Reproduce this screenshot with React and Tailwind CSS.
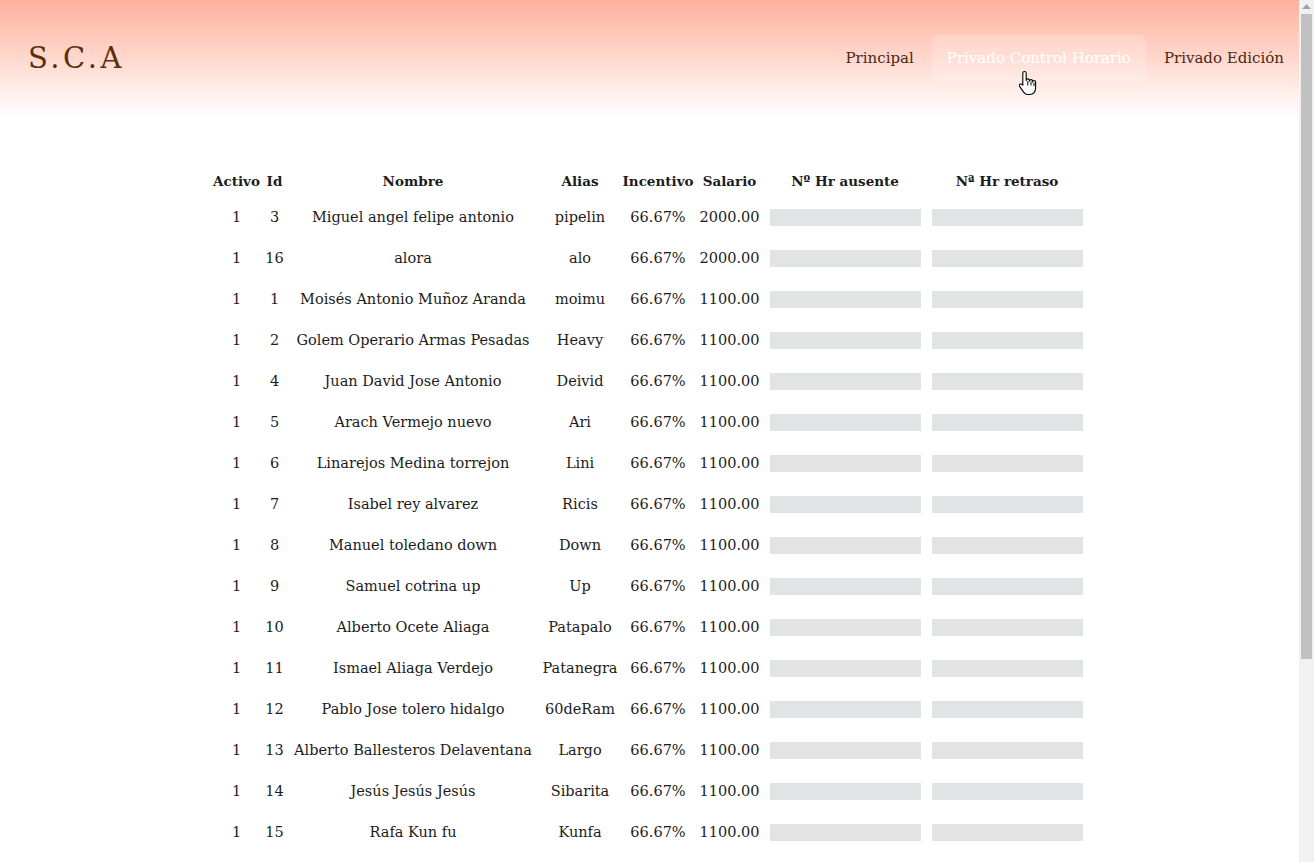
import React from 'react';

const EMPLEADOS = [
  { activo: 1, id: 3, nombre: 'Miguel angel felipe antonio', alias: 'pipelin', incentivo: '66.67%', salario: '2000.00' },
  { activo: 1, id: 16, nombre: 'alora', alias: 'alo', incentivo: '66.67%', salario: '2000.00' },
  { activo: 1, id: 1, nombre: 'Moisés Antonio Muñoz Aranda', alias: 'moimu', incentivo: '66.67%', salario: '1100.00' },
  { activo: 1, id: 2, nombre: 'Golem Operario Armas Pesadas', alias: 'Heavy', incentivo: '66.67%', salario: '1100.00' },
  { activo: 1, id: 4, nombre: 'Juan David Jose Antonio', alias: 'Deivid', incentivo: '66.67%', salario: '1100.00' },
  { activo: 1, id: 5, nombre: 'Arach Vermejo nuevo', alias: 'Ari', incentivo: '66.67%', salario: '1100.00' },
  { activo: 1, id: 6, nombre: 'Linarejos Medina torrejon', alias: 'Lini', incentivo: '66.67%', salario: '1100.00' },
  { activo: 1, id: 7, nombre: 'Isabel rey alvarez', alias: 'Ricis', incentivo: '66.67%', salario: '1100.00' },
  { activo: 1, id: 8, nombre: 'Manuel toledano down', alias: 'Down', incentivo: '66.67%', salario: '1100.00' },
  { activo: 1, id: 9, nombre: 'Samuel cotrina up', alias: 'Up', incentivo: '66.67%', salario: '1100.00' },
  { activo: 1, id: 10, nombre: 'Alberto Ocete Aliaga', alias: 'Patapalo', incentivo: '66.67%', salario: '1100.00' },
  { activo: 1, id: 11, nombre: 'Ismael Aliaga Verdejo', alias: 'Patanegra', incentivo: '66.67%', salario: '1100.00' },
  { activo: 1, id: 12, nombre: 'Pablo Jose tolero hidalgo', alias: '60deRam', incentivo: '66.67%', salario: '1100.00' },
  { activo: 1, id: 13, nombre: 'Alberto Ballesteros Delaventana', alias: 'Largo', incentivo: '66.67%', salario: '1100.00' },
  { activo: 1, id: 14, nombre: 'Jesús Jesús Jesús', alias: 'Sibarita', incentivo: '66.67%', salario: '1100.00' },
  { activo: 1, id: 15, nombre: 'Rafa Kun fu', alias: 'Kunfa', incentivo: '66.67%', salario: '1100.00' },
];

const COLS = 'grid grid-cols-[51px_25px_252px_82px_74px_69px_162px_162px]';

function HandCursor() {
  return (
    <svg className="absolute left-[1018px] top-[70px]" width="20" height="26" viewBox="0 0 20 26">
      <path
        d="M6.5 1.5c1 0 1.7.7 1.7 1.7v7.3c0-1 .7-1.6 1.6-1.6s1.6.7 1.6 1.6v.6c0-.9.7-1.5 1.6-1.5s1.6.7 1.6 1.6v.8c0-.9.7-1.5 1.5-1.5.9 0 1.5.7 1.5 1.6v6.2c0 3.3-2.3 6.2-5.8 6.2H10c-2 0-3.3-.9-4.4-2.4L1.8 16.6c-.6-.8-.4-1.8.3-2.3.8-.5 1.7-.3 2.3.4l.4.5V3.2c0-1 .7-1.7 1.7-1.7z"
        fill="#fff"
        stroke="#000"
        strokeWidth="1.1"
        strokeLinejoin="round"
      />
      <path d="M9.8 11v4.5M13 11.5v4M16 12.5v3.5" stroke="#000" strokeWidth="1" />
    </svg>
  );
}

// barra de desplazamiento del navegador, tal como sale en la captura
function ScrollBar() {
  return (
    <div className="fixed right-0 top-0 h-[862px] w-[15px] bg-[#f1f1f1]">
      <svg className="absolute left-[3px] top-[4px]" width="9" height="5" viewBox="0 0 9 5">
        <path d="M0 5L4.5 0L9 5z" fill="#a3a3a3" />
      </svg>
      <div className="absolute left-[2px] top-[14px] h-[645px] w-[11px] bg-[#c1c1c1]" />
    </div>
  );
}

export default function App() {
  return (
    <div className="relative min-h-[1140px] w-[1299px] bg-white font-['DejaVu_Serif',serif] text-[#1c1c1c]">
      {/* Header */}
      <header className="flex h-[117px] items-center justify-between bg-gradient-to-b from-[#ffb09d] to-white pl-[28px]">
        <h1 className="text-[29px] tracking-[3.5px] text-[#5b2e0c]">S.C.A</h1>
        <nav className="flex items-center gap-[3px] text-[15px] text-[#4a2a12]">
          <a className="rounded-md px-[15px] py-[12px]">Principal</a>
          <a className="rounded-md bg-white/20 px-[15px] py-[12px] text-white">Privado Control Horario</a>
          <a className="rounded-md px-[15px] py-[12px]">Privado Edición</a>
        </nav>
      </header>
      <HandCursor />

      {/* Tabla */}
      <div className="mx-auto mt-[51px] w-[877px] text-[14.5px]">
        <div className={`${COLS} h-[26px] items-center text-center text-[13.5px] font-bold`}>
          <div>Activo</div>
          <div>Id</div>
          <div>Nombre</div>
          <div>Alias</div>
          <div>Incentivo</div>
          <div>Salario</div>
          <div>Nº Hr ausente</div>
          <div>Nª Hr retraso</div>
        </div>
        <div className="mt-[3px]">
          {EMPLEADOS.map((e) => (
            <div key={e.id} className={`${COLS} h-[41px] items-center text-center`}>
              <div>{e.activo}</div>
              <div>{e.id}</div>
              <div className="whitespace-nowrap">{e.nombre}</div>
              <div>{e.alias}</div>
              <div>{e.incentivo}</div>
              <div>{e.salario}</div>
              <div className="flex justify-center">
                <input className="h-[17px] w-[151px] bg-[#e2e3e5] outline-none" />
              </div>
              <div className="flex justify-center">
                <input className="h-[17px] w-[151px] bg-[#e2e3e5] outline-none" />
              </div>
            </div>
          ))}
        </div>
      </div>
      <ScrollBar />
    </div>
  );
}
